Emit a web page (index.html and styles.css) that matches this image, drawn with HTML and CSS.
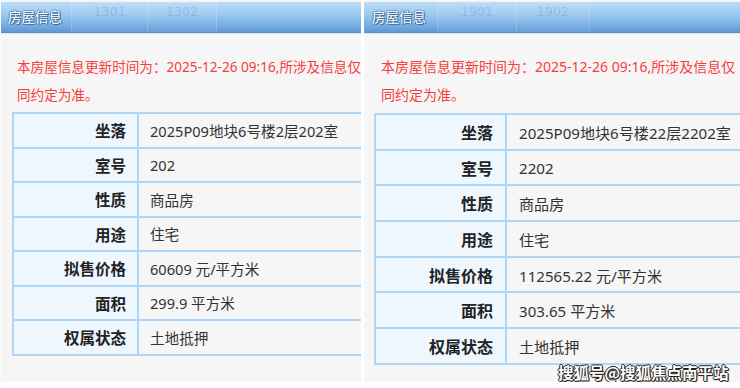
FILE: index.html
```html
<!DOCTYPE html>
<html lang="zh-CN">
<head>
<meta charset="utf-8">
<title>房屋信息</title>
<link rel="stylesheet" href="styles.css">
</head>
<body>
<div class="page">
  <section class="panel panel-a">
    <div class="hd">
      <span class="hd-title">房屋信息</span>
      <span class="ghost tab1">1301</span>
      <span class="ghost tab2">1302</span>
    </div>
    <div class="notice">
      <div class="notice-line">本房屋信息更新时间为：2025-12-26 09:16,所涉及信息仅</div>
      <div class="notice-line">同约定为准。</div>
    </div>
    <table class="info">
      <tr><th>坐落</th><td>2025P09地块6号楼2层202室</td></tr>
      <tr><th>室号</th><td>202</td></tr>
      <tr><th>性质</th><td>商品房</td></tr>
      <tr><th>用途</th><td>住宅</td></tr>
      <tr><th>拟售价格</th><td>60609 元/平方米</td></tr>
      <tr><th>面积</th><td>299.9 平方米</td></tr>
      <tr><th>权属状态</th><td>土地抵押</td></tr>
    </table>
  </section>
  <section class="panel panel-b">
    <div class="hd">
      <span class="hd-title">房屋信息</span>
      <span class="ghost tab1">1901</span>
      <span class="ghost tab2">1902</span>
    </div>
    <div class="notice">
      <div class="notice-line">本房屋信息更新时间为：2025-12-26 09:16,所涉及信息仅</div>
      <div class="notice-line">同约定为准。</div>
    </div>
    <table class="info">
      <tr><th>坐落</th><td>2025P09地块6号楼22层2202室</td></tr>
      <tr><th>室号</th><td>2202</td></tr>
      <tr><th>性质</th><td>商品房</td></tr>
      <tr><th>用途</th><td>住宅</td></tr>
      <tr><th>拟售价格</th><td>112565.22 元/平方米</td></tr>
      <tr><th>面积</th><td>303.65 平方米</td></tr>
      <tr><th>权属状态</th><td>土地抵押</td></tr>
    </table>
    <div class="watermark">搜狐号@搜狐焦点南平站</div>
  </section>
</div>
</body>
</html>
```
FILE: styles.css
```css
* { box-sizing: border-box; }
html, body {
  margin: 0;
  padding: 0;
  background: #ffffff;
  font-family: "Noto Sans", "Noto Sans CJK SC", sans-serif;
}
.page {
  display: flex;
  gap: 3px;
  width: 740px;
  height: 388px;
  overflow: hidden;
}
.panel {
  position: relative;
  height: 382px;
  background: #f6f6f6;
  overflow: hidden;
  padding-top: 2px;
}
.panel-a { width: 361px; border-left: 1px solid #fbfbfb; }
.panel-b { width: 376px; }

.hd {
  display: flex;
  align-items: stretch;
  height: 31px;
  background: linear-gradient(to bottom, #bcdcf7 0%, #9ccaf0 40%, #78b0e4 75%, #6198d6 100%);
  border-bottom: 1px solid #5a8fcb;
  box-shadow: 0 1px 0 #dbe9f6;
}
.hd-title {
  display: flex;
  align-items: center;
  width: 71px;
  padding-left: 7px;
  padding-bottom: 3px;
  font-family: "Noto Sans CJK SC", sans-serif;
  font-size: 13.5px;
  color: #ffffff;
  text-shadow: 1px 1px 0 #3d6a9e, -1px 0 0 #5c8cc2, 0 -1px 0 #6c9bd0, 1px 0 1px #3d6a9e;
  border-right: 1px solid rgba(255, 255, 255, 0.18);
}
.ghost {
  display: flex;
  align-items: flex-start;
  justify-content: center;
  padding-top: 2px;
  font-family: "DejaVu Sans", sans-serif;
  font-size: 12.5px;
  color: rgba(70, 110, 160, 0.22);
  border-right: 1px solid rgba(255, 255, 255, 0.16);
  background: rgba(255, 255, 255, 0.05);
}
.panel-a .tab1 { width: 76px; }
.panel-a .tab2 { width: 69px; }
.panel-b .hd-title { width: 74px; padding-left: 8px; }
.panel-b .tab1 { width: 79px; }
.panel-b .tab2 { width: 73px; }

.notice {
  color: #f83c3c;
  font-size: 13.6px;
  line-height: 28px;
  padding: 20px 0 0 16px;
  white-space: nowrap;
}
.panel-b .notice {
  font-size: 14px;
  padding-left: 17px;
}

.info {
  margin: 3px 0 0 11px;
  border-collapse: collapse;
  width: 440px;
  border: 2px solid #afd6f7;
}
.info th,
.info td {
  border: 2px solid #afd6f7;
  height: 34.5px;
  padding: 0 11px;
  white-space: nowrap;
}
.info th {
  width: 125px;
  text-align: right;
  background: #eef6fe;
  color: #222222;
  font-family: "Noto Sans CJK SC", sans-serif;
  font-size: 15.5px;
  font-weight: bold;
}
.info td {
  text-align: left;
  color: #333333;
  font-size: 14.6px;
}
.panel-b .info {
  margin: 4px 0 0 10px;
}
.panel-b .info th,
.panel-b .info td {
  height: 35.7px;
  padding: 0 12px;
}
.panel-b .info th { width: 131px; font-size: 16px; }
.panel-b .info td { font-size: 15.1px; }

.watermark {
  position: absolute;
  left: 194px;
  top: 361px;
  font-family: "Noto Sans CJK SC", sans-serif;
  font-size: 15.5px;
  font-weight: bold;
  color: #ffffff;
  white-space: nowrap;
  text-shadow: 1px 0 0 #222, -1px 0 0 #222, 0 1px 0 #222, 0 -1px 0 #222, 1px 1px 1px #222;
}
```
